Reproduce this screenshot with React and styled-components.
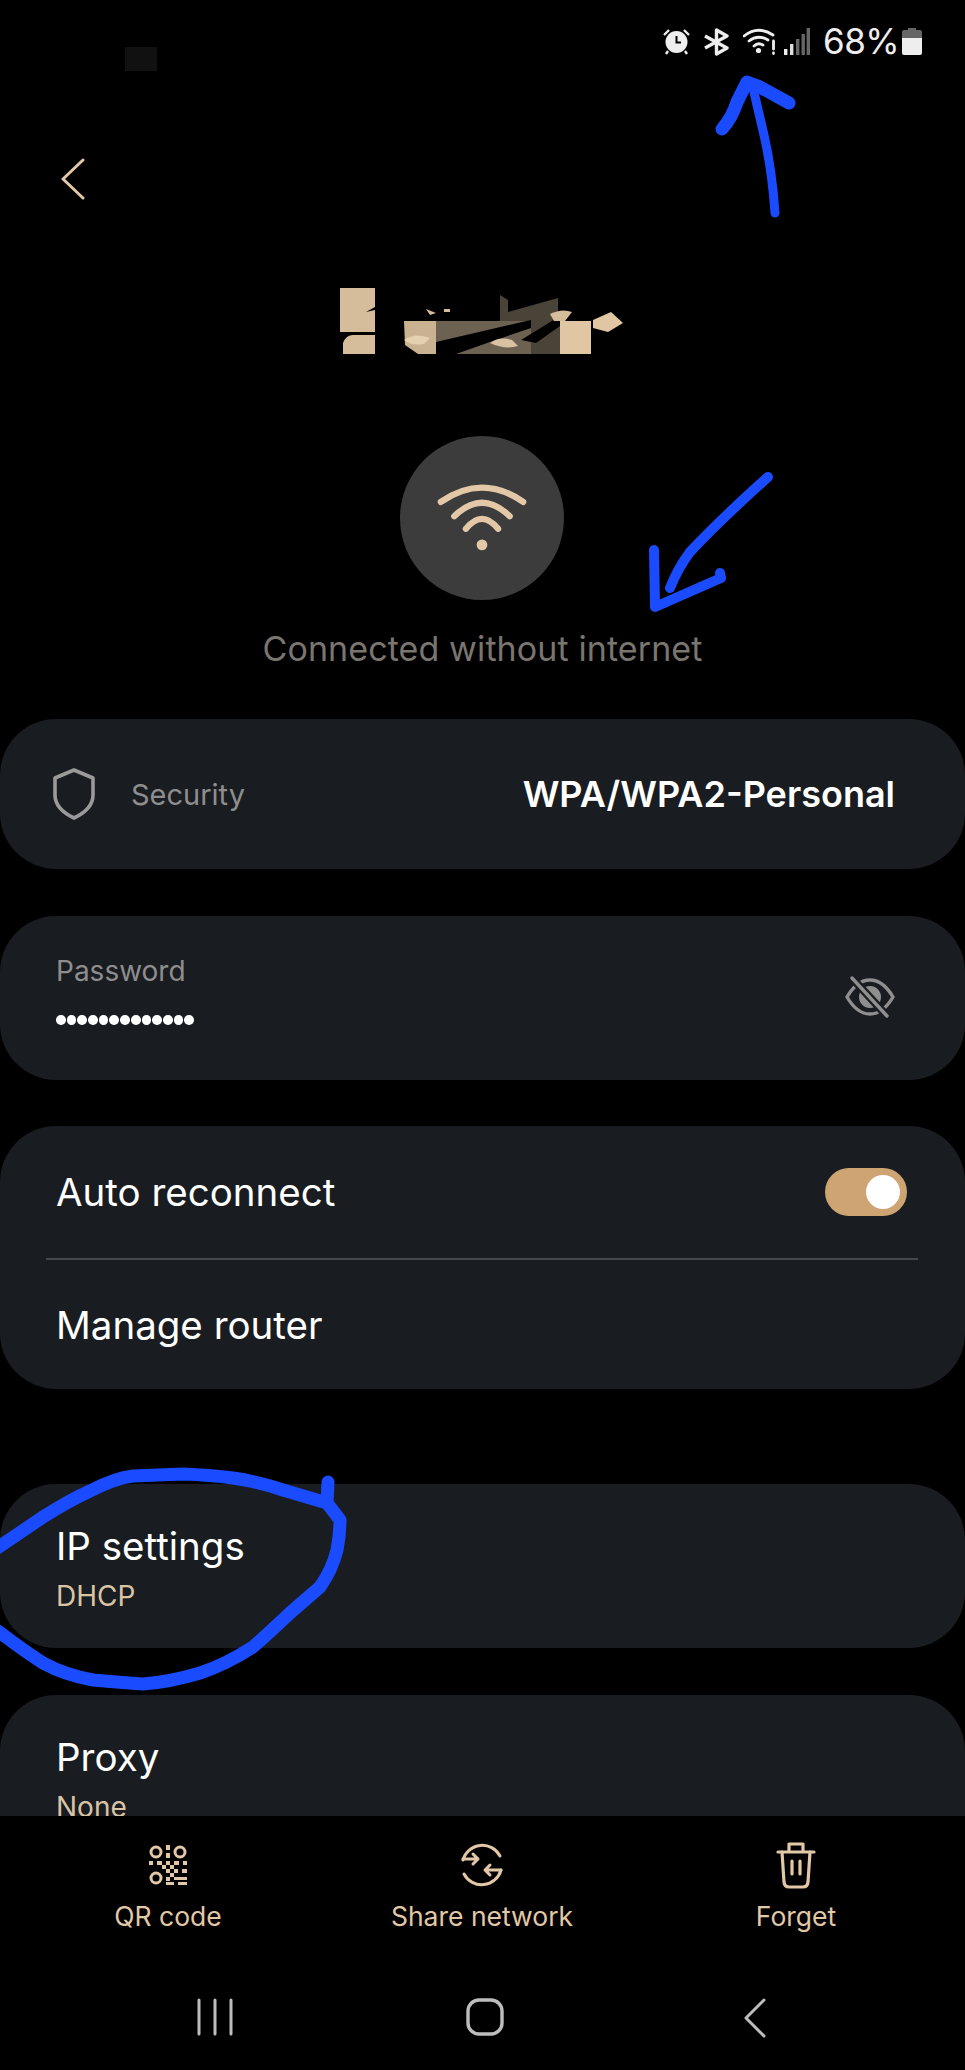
import React from "react";
import styled, { createGlobalStyle } from "styled-components";

const tan = "#e2c8a6";
const ink = "#191c20";

const GlobalStyle = createGlobalStyle`
  html, body {
    margin: 0;
    padding: 0;
    background: #000;
  }
  * {
    box-sizing: border-box;
  }
`;

const Page = styled.div`
  position: relative;
  width: 965px;
  height: 2070px;
  overflow: hidden;
  background: #000;
  display: flex;
  flex-direction: column;
  font-family: Inter, "Noto Sans", sans-serif;
`;

const Main = styled.main`
  flex: 1;
  min-height: 0;
  overflow: hidden;
`;

const StatusBar = styled.div`
  height: 84px;
  padding: 28px 43px 0 125px;
  display: flex;
  align-items: flex-start;
  color: #eee;
`;

const Smudge = styled.div`
  width: 32px;
  height: 24px;
  margin-top: 19px;
  background: #111;
`;

const StatusIcons = styled.div`
  margin-left: auto;
  display: flex;
  align-items: center;
  height: 27px;
`;

const StatusGlyph = styled.svg`
  display: block;
  flex: none;
  margin-right: ${(p) => p.$gap || 0}px;
`;

const Battery = styled.span`
  font-size: 35px;
  line-height: 27px;
  letter-spacing: -0.6px;
  margin-right: 3px;
`;

const BackRow = styled.div`
  margin-top: 74px;
  padding-left: 60px;
  height: 42px;
`;

const Title = styled.div`
  margin-top: 88px;
  height: 67px;
  display: flex;
  justify-content: center;
`;

const WifiBadge = styled.div`
  width: 164px;
  height: 164px;
  margin: 81px auto 0;
  transform: translateX(-1px);
  border-radius: 50%;
  background: #3c3c3c;
  display: flex;
  align-items: center;
  justify-content: center;
`;

const ConnState = styled.div`
  margin-top: 27px;
  height: 44px;
  line-height: 44px;
  text-align: center;
  font-size: 34px;
  letter-spacing: 0.1px;
  color: #7a756f;
`;

const CardList = styled.div`
  margin-top: 48px;
  display: flex;
  flex-direction: column;
`;

const Card = styled.section`
  background: ${ink};
  border-radius: 56px;
  margin-bottom: ${(p) => p.$after}px;
  height: ${(p) => p.$height}px;
`;

const SecurityRow = styled.div`
  height: 150px;
  padding: 0 70px 0 52px;
  display: flex;
  align-items: center;
`;

const SecurityLabel = styled.span`
  margin-left: 35px;
  font-size: 29px;
  color: #8e8e8e;
`;

const SecurityValue = styled.span`
  margin-left: auto;
  font-size: 36px;
  font-weight: 600;
  color: #fff;
`;

const PasswordRow = styled.div`
  height: 164px;
  padding: 37px 70px 0 56px;
  display: flex;
  align-items: flex-start;
  justify-content: space-between;
`;

const FieldLabel = styled.div`
  font-size: 28px;
  line-height: 36px;
  color: #8e8e8e;
`;

const Dots = styled.div`
  display: flex;
  gap: 1px;
  margin-top: 26px;
`;

const Dot = styled.i`
  width: 9.7px;
  height: 9.7px;
  border-radius: 50%;
  background: #fff;
`;

const EyeWrap = styled.div`
  margin-top: 23px;
`;

const ToggleRow = styled.div`
  height: 132px;
  padding: 0 58px 0 56px;
  display: flex;
  align-items: center;
  justify-content: space-between;
`;

const RowTitle = styled.div`
  font-size: 38.5px;
  line-height: 48px;
  color: #fff;
`;

const Toggle = styled.div`
  width: 82px;
  height: 48px;
  border-radius: 24px;
  background: #cfa473;
  padding: 7px;
  display: flex;
  justify-content: flex-end;
`;

const Knob = styled.div`
  width: 34px;
  height: 34px;
  border-radius: 50%;
  background: #fff;
`;

const Divider = styled.hr`
  margin: 0 47px 0 46px;
  border: 0;
  height: 2px;
  background: #45484c;
`;

const LinkRow = styled.div`
  height: 129px;
  padding: 0 56px;
  display: flex;
  align-items: center;
`;

const StackRow = styled.div`
  padding: 38px 56px 0;
`;

const Sub = styled.div`
  margin-top: 8px;
  font-size: 28px;
  line-height: 36px;
  color: #d9c4a5;
`;

const Footer = styled.footer`
  flex: none;
  height: 254px;
  display: flex;
  flex-direction: column;
`;

const Actions = styled.div`
  padding: 24px 12px 0 11px;
  display: grid;
  grid-template-columns: repeat(3, 1fr);
`;

const Action = styled.div`
  display: flex;
  flex-direction: column;
  align-items: center;
  color: ${tan};
`;

const ActionIcon = styled.div`
  height: 50px;
  display: flex;
  align-items: center;
`;

const ActionLabel = styled.div`
  margin-top: 9px;
  font-size: 26.5px;
  line-height: 34px;
`;

const NavBar = styled.nav`
  margin-top: 65px;
  padding: 0 75px 0 80px;
  display: grid;
  grid-template-columns: repeat(3, 1fr);
  justify-items: center;
`;

const Annotations = styled.svg`
  position: absolute;
  left: 0;
  top: 0;
  pointer-events: none;
`;

function WifiGlyph() {
  return (
    <svg width="90" height="68" viewBox="0 0 100 76" fill="none" stroke={tan} strokeWidth="7" strokeLinecap="round">
      <path d="M4 20 Q50 -12 96 20" />
      <path d="M19 36 Q50 6 81 36" />
      <path d="M32 50 Q50 28 68 50" />
      <circle cx="50" cy="68" r="6" fill={tan} stroke="none" />
    </svg>
  );
}

function RedactedName() {
  return (
    <svg width="285" height="67" viewBox="0 0 285 67">
      <path d="M0 0 H35 V19 L26 24 L35 22 V44 H0 Z" fill="#d5bd9c" />
      <path d="M3 55 Q6 47 13 47 H35 V66 H3 Z" fill="#d5bd9c" />
      <path d="M64 33 H96 V66 H78 L65 57 Z" fill="#c9b292" />
      <path d="M96 33 H191 V66 H96 Z" fill="#6d6252" />
      <path d="M160 7 L168 12 V24 L218 10 V33 H160 Z" fill="#4a4338" />
      <path d="M191 33 H220 V66 H191 Z" fill="#4a4338" />
      <path d="M96 54 L191 32 V40 L150 54 L116 66 H96 Z" fill="#000" />
      <path d="M181 52 L220 28 V38 L196 55 Z" fill="#000" />
      <path d="M150 55 Q160 48 172 52 L178 58 Q165 62 150 55 Z" fill="#d9c2a2" />
      <path d="M220 33 H251 V66 H220 Z" fill="#e0c6a3" />
      <path d="M253 32 L271 24 L283 35 L268 44 L253 40 Z" fill="#e0c6a3" />
      <path d="M86 21 L96 25 L90 27 Z M104 21 H110 V24 H104 Z" fill="#d5bd9c" />
      <path d="M210 26 Q222 20 232 24 L225 33 H214 Z" fill="#d5bd9c" />
      <path d="M64 52 Q75 44 90 50 L84 56 Q72 58 64 52 Z" fill="#e5d0b2" />
    </svg>
  );
}

function Shield() {
  return (
    <svg width="44" height="54" viewBox="0 0 44 54" fill="none" stroke="#9a9a9a" strokeWidth="3.6" strokeLinejoin="round">
      <path d="M22 3 L41 11 V28 Q41 42 22 51 Q3 42 3 28 V11 Z" />
    </svg>
  );
}

function EyeOff() {
  return (
    <svg width="50" height="42" viewBox="0 0 50 42" fill="none" stroke="#8f8f8f" strokeWidth="3.4" strokeLinecap="round">
      <path d="M2 21 Q12 4 25 4 Q38 4 48 21 Q38 38 25 38 Q12 38 2 21 Z" />
      <circle cx="25" cy="21" r="11" fill="#8f8f8f" stroke="none" />
      <path d="M7 2 L42 40" stroke={ink} strokeWidth="8" />
      <path d="M7 2 L42 40" />
    </svg>
  );
}

function QrIcon() {
  return (
    <svg width="38" height="40" viewBox="0 0 38 40" fill={tan}>
      <g fill="none" stroke={tan} strokeWidth="3">
        <circle cx="7" cy="7" r="5" />
        <circle cx="31" cy="7" r="5" />
        <circle cx="7" cy="33" r="5" />
      </g>
      <path d="M17 0h4v5h-4zM17 8h4v5h-4zM0 16h4v4h-4zM8 16h5v4h-5zM17 16h4v4h-4zM25 16h5v4h-5zM34 16h4v4h-4zM21 20h4v4h-4zM13 20h4v4h-4zM17 24h4v4h-4zM25 24h4v4h-4zM33 24h5v4h-5zM21 28h4v4h-4zM17 32h4v4h-4zM25 32h13v3h-13zM17 37h8v3h-8zM29 37h9v3h-9z" />
    </svg>
  );
}

function ShareIcon() {
  return (
    <svg width="44" height="44" viewBox="0 0 44 44" fill="none" stroke={tan} strokeWidth="3" strokeLinecap="round" strokeLinejoin="round">
      <path d="M3 17 A20 20 0 0 1 40 13" />
      <path d="M41 27 A20 20 0 0 1 4 31" />
      <path d="M3 17 H18 M13 12 L18 17 L13 22" transform="translate(0 -1)" />
      <path d="M41 27 H25 M30 22 L25 27 L30 32" />
    </svg>
  );
}

function TrashIcon() {
  return (
    <svg width="40" height="48" viewBox="0 0 40 48" fill="none" stroke={tan} strokeWidth="3.2" strokeLinecap="round" strokeLinejoin="round">
      <path d="M2 11 H38" />
      <path d="M13 10 V3 H27 V10" />
      <path d="M6 11 L8 41 Q8.5 46 13 46 H27 Q31.5 46 32 41 L34 11" />
      <path d="M16 20 V33 M24 20 V33" />
    </svg>
  );
}

function StatusIconsRow() {
  return (
    <StatusIcons>
      <StatusGlyph $gap={13} width="27" height="27" viewBox="0 0 27 27">
        <circle cx="13.5" cy="14" r="11" fill="#eee" />
        <path d="M13.5 8 V14.5 H18" fill="none" stroke="#000" strokeWidth="2" />
        <path d="M1 7 L6 2 M26 7 L21 2 M5 23 L3 26 M22 23 L24 26" stroke="#eee" strokeWidth="2.4" />
      </StatusGlyph>
      <StatusGlyph $gap={13} width="27" height="28" viewBox="0 0 27 28" fill="none" stroke="#eee" strokeWidth="3.4" strokeLinejoin="round">
        <path d="M2 8 L24 20 L13.5 26 V2 L24 8 L2 20" />
      </StatusGlyph>
      <StatusGlyph $gap={7} width="34" height="27" viewBox="0 0 34 27" fill="none" stroke="#eee" strokeWidth="2.8" strokeLinecap="round">
        <path d="M1 8 Q15 -3 30 7" />
        <path d="M6 13 Q15 6 25 12" />
        <path d="M11 18 Q15 14 20 17" />
        <circle cx="15.5" cy="22.5" r="2.6" fill="#eee" stroke="none" />
        <path d="M30.5 13 V21 M30.5 25 V25.5" />
      </StatusGlyph>
      <StatusGlyph $gap={13} width="26" height="27" viewBox="0 0 26 27">
        <rect x="0" y="21" width="3.4" height="6" fill="#eee" />
        <rect x="6" y="16" width="3.4" height="11" fill="#ddd" />
        <rect x="12" y="11" width="3.4" height="16" fill="#666" />
        <rect x="17.5" y="6" width="3.4" height="21" fill="#666" />
        <rect x="22.6" y="0" width="3.4" height="27" fill="#666" />
      </StatusGlyph>
      <Battery>68%</Battery>
      <StatusGlyph width="20" height="27" viewBox="0 0 20 27">
        <path d="M6 0 H14 V2 H18 Q20 2 20 4 V10 H0 V4 Q0 2 2 2 H6 Z" fill="#666" />
        <path d="M0 10 H20 V25 Q20 27 18 27 H2 Q0 27 0 25 Z" fill="#eee" />
      </StatusGlyph>
    </StatusIcons>
  );
}

function App() {
  const dots = Array.from({ length: 13 });
  return (
    <Page>
      <GlobalStyle />
      <Main>
        <StatusBar>
          <Smudge />
          <StatusIconsRow />
        </StatusBar>
        <BackRow>
          <svg width="26" height="42" viewBox="0 0 26 42" fill="none" stroke={tan} strokeWidth="3" strokeLinecap="round" strokeLinejoin="round">
            <path d="M23 2 L3 21 L23 40" />
          </svg>
        </BackRow>
        <Title>
          <RedactedName />
        </Title>
        <WifiBadge>
          <WifiGlyph />
        </WifiBadge>
        <ConnState>Connected without internet</ConnState>
        <CardList>
          <Card $after={47} $height={150}>
            <SecurityRow>
              <Shield />
              <SecurityLabel>Security</SecurityLabel>
              <SecurityValue>WPA/WPA2-Personal</SecurityValue>
            </SecurityRow>
          </Card>
          <Card $after={46} $height={164}>
            <PasswordRow>
              <div>
                <FieldLabel>Password</FieldLabel>
                <Dots>
                  {dots.map((_, i) => (
                    <Dot key={i} />
                  ))}
                </Dots>
              </div>
              <EyeWrap>
                <EyeOff />
              </EyeWrap>
            </PasswordRow>
          </Card>
          <Card $after={95} $height={263}>
            <ToggleRow>
              <RowTitle>Auto reconnect</RowTitle>
              <Toggle>
                <Knob />
              </Toggle>
            </ToggleRow>
            <Divider />
            <LinkRow>
              <RowTitle>Manage router</RowTitle>
            </LinkRow>
          </Card>
          <Card $after={47} $height={164}>
            <StackRow>
              <RowTitle>IP settings</RowTitle>
              <Sub>DHCP</Sub>
            </StackRow>
          </Card>
          <Card $after={0} $height={200}>
            <StackRow>
              <RowTitle>Proxy</RowTitle>
              <Sub>None</Sub>
            </StackRow>
          </Card>
        </CardList>
      </Main>
      <Footer>
        <Actions>
          <Action>
            <ActionIcon>
              <QrIcon />
            </ActionIcon>
            <ActionLabel>QR code</ActionLabel>
          </Action>
          <Action>
            <ActionIcon>
              <ShareIcon />
            </ActionIcon>
            <ActionLabel>Share network</ActionLabel>
          </Action>
          <Action>
            <ActionIcon>
              <TrashIcon />
            </ActionIcon>
            <ActionLabel>Forget</ActionLabel>
          </Action>
        </Actions>
        <NavBar>
          <svg width="36" height="38" viewBox="0 0 36 38" stroke="#bdbdbd" strokeWidth="3" strokeLinecap="round">
            <path d="M2 2 V36 M18 2 V36 M34 2 V36" />
          </svg>
          <svg width="38" height="38" viewBox="0 0 38 38" fill="none" stroke="#bdbdbd" strokeWidth="3.4">
            <rect x="2" y="2" width="34" height="34" rx="11" />
          </svg>
          <svg width="24" height="40" viewBox="0 0 24 40" fill="none" stroke="#bdbdbd" strokeWidth="3" strokeLinecap="round" strokeLinejoin="round">
            <path d="M21 2 L3 20 L21 38" />
          </svg>
        </NavBar>
      </Footer>
      <Annotations width="965" height="2070" viewBox="0 0 965 2070" fill="none" stroke="#1a4bff" strokeLinecap="round" strokeLinejoin="round">
        <path d="M775 213 Q772 170 764 135 L753 88" strokeWidth="9" />
        <path d="M722 129 Q732 118 737 102 L747 82 L758 86 L789 103" strokeWidth="13" />
        <path d="M768 477 Q720 520 690 552 Q678 568 670 588" strokeWidth="10" />
        <path d="M654 550 L655 607 L721 578 L720 573" strokeWidth="10" />
        <path
          d="M-10 1553 L43 1517 Q70 1500 90 1491 Q115 1478 133 1476 L183 1474 Q210 1475 233 1478 Q260 1482 283 1490 L327 1503 L328 1482 M327 1503 L340 1520 Q340 1535 337 1550 Q332 1570 320 1587 L290 1613 Q270 1632 253 1647 Q225 1665 200 1673 Q170 1682 143 1684 Q115 1682 93 1680 Q65 1675 43 1663 Q20 1648 -10 1625"
          strokeWidth="13"
        />
      </Annotations>
    </Page>
  );
}

export default App;
